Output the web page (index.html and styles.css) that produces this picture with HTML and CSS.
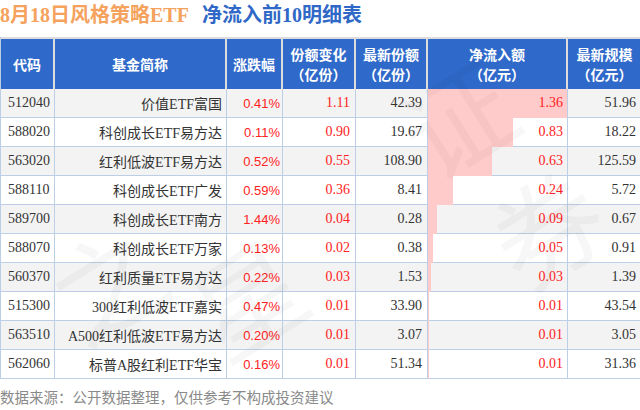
FILE: index.html
```html
<!DOCTYPE html>
<html lang="zh-CN">
<head>
<meta charset="utf-8">
<title>8月18日风格策略ETF 净流入前10明细表</title>
<link rel="stylesheet" href="styles.css">
</head>
<body>
<div class="page">
  <h1 class="title"><span class="t-orange">8月18日风格策略ETF</span><span class="t-blue">净流入前10明细表</span></h1>
  <div class="grid">
    <div class="hd">代码</div>
    <div class="hd">基金简称</div>
    <div class="hd">涨跌幅</div>
    <div class="hd">份额变化<br>（亿份）</div>
    <div class="hd">最新份额<br>（亿份）</div>
    <div class="hd">净流入额<br>（亿元）</div>
    <div class="hd last">最新规模<br>（亿元）</div>

    <div class="c code odd">512040</div><div class="c name odd">价值ETF富国</div><div class="c pct odd">0.41%</div><div class="c num red odd">1.11</div><div class="c num odd">42.39</div><div class="c flow odd"><div class="bar" style="width:139px"></div><span>1.36</span></div><div class="c num odd last">51.96</div>

    <div class="c code">588020</div><div class="c name">科创成长ETF易方达</div><div class="c pct">0.11%</div><div class="c num red">0.90</div><div class="c num">19.67</div><div class="c flow"><div class="bar" style="width:85px"></div><span>0.83</span></div><div class="c num last">18.22</div>

    <div class="c code odd">563020</div><div class="c name odd">红利低波ETF易方达</div><div class="c pct odd">0.52%</div><div class="c num red odd">0.55</div><div class="c num odd">108.90</div><div class="c flow odd"><div class="bar" style="width:64px"></div><span>0.63</span></div><div class="c num odd last">125.59</div>

    <div class="c code">588110</div><div class="c name">科创成长ETF广发</div><div class="c pct">0.59%</div><div class="c num red">0.36</div><div class="c num">8.41</div><div class="c flow"><div class="bar" style="width:25px"></div><span>0.24</span></div><div class="c num last">5.72</div>

    <div class="c code odd">589700</div><div class="c name odd">科创成长ETF南方</div><div class="c pct odd">1.44%</div><div class="c num red odd">0.04</div><div class="c num odd">0.28</div><div class="c flow odd"><div class="bar" style="width:9px"></div><span>0.09</span></div><div class="c num odd last">0.67</div>

    <div class="c code">588070</div><div class="c name">科创成长ETF万家</div><div class="c pct">0.13%</div><div class="c num red">0.02</div><div class="c num">0.38</div><div class="c flow"><div class="bar" style="width:5px"></div><span>0.05</span></div><div class="c num last">0.91</div>

    <div class="c code odd">560370</div><div class="c name odd">红利质量ETF易方达</div><div class="c pct odd">0.22%</div><div class="c num red odd">0.03</div><div class="c num odd">1.53</div><div class="c flow odd"><div class="bar" style="width:3px"></div><span>0.03</span></div><div class="c num odd last">1.39</div>

    <div class="c code">515300</div><div class="c name">300红利低波ETF嘉实</div><div class="c pct">0.47%</div><div class="c num red">0.01</div><div class="c num">33.90</div><div class="c flow"><div class="bar" style="width:1px"></div><span>0.01</span></div><div class="c num last">43.54</div>

    <div class="c code odd">563510</div><div class="c name odd">A500红利低波ETF易方达</div><div class="c pct odd">0.20%</div><div class="c num red odd">0.01</div><div class="c num odd">3.07</div><div class="c flow odd"><div class="bar" style="width:1px"></div><span>0.01</span></div><div class="c num odd last">3.05</div>

    <div class="c code">562060</div><div class="c name">标普A股红利ETF华宝</div><div class="c pct">0.16%</div><div class="c num red">0.01</div><div class="c num">51.34</div><div class="c flow"><div class="bar" style="width:1px"></div><span>0.01</span></div><div class="c num last">31.36</div>
  </div>
  <p class="source">数据来源：公开数据整理，仅供参考不构成投资建议</p>
  <div class="wm" aria-hidden="true">
    <span class="w w1">证</span>
    <span class="w w2">券</span>
    <span class="w w3">之</span>
    <span class="w w4">星</span>
  </div>
</div>
</body>
</html>
```

FILE: styles.css
```css
html, body {
  margin: 0;
  padding: 0;
  background: #ffffff;
}
body {
  width: 640px;
  height: 410px;
  overflow: hidden;
  font-family: "Liberation Serif", "Noto Sans CJK SC", serif;
}
.page {
  position: relative;
  width: 640px;
  height: 410px;
  overflow: hidden;
}
.title {
  margin: 0;
  height: 37px;
  display: flex;
  align-items: center;
  gap: 13px;
  padding: 0 0 8px 0;
  box-sizing: border-box;
  font-size: 20px;
  font-weight: bold;
  line-height: 24px;
  font-family: "Liberation Serif", "Noto Sans CJK SC", serif;
}
.t-orange { color: #f5a25d; }
.t-blue { color: #2f68c6; }

.grid {
  display: grid;
  grid-template-columns: 54px 172px 56px 73px 72px 140px 73px;
  grid-template-rows: 52px repeat(10, 29px);
  border-left: 1px solid #bccfe6;
}
.hd {
  background: #2f69ca;
  color: #ffffff;
  font-family: "Noto Sans CJK SC", sans-serif;
  font-weight: bold;
  font-size: 14px;
  line-height: 20px;
  display: flex;
  align-items: center;
  justify-content: center;
  text-align: center;
  border-top: 2px solid #dcdcdc;
  border-right: 2px solid #dcdcdc;
  box-sizing: border-box;
}
.hd.last { border-right: 0; }
.c {
  box-sizing: border-box;
  border-right: 1px solid #bccfe6;
  border-bottom: 1px solid #bccfe6;
  display: flex;
  align-items: center;
  font-size: 14px;
  color: #333333;
  background: #ffffff;
  white-space: nowrap;
}
.c.odd { background: #f3f3f3; }
.c.last { border-right: 0; }
.code {
  padding-left: 7px;
  font-family: "Liberation Serif", "Noto Sans CJK SC", serif;
}
.name {
  justify-content: flex-end;
  padding-right: 4px;
  font-family: "Liberation Serif", "Noto Sans CJK SC", serif;
}
.pct {
  justify-content: flex-end;
  padding-right: 2px;
  color: #ff2222;
  font-family: "Liberation Sans", "Noto Sans CJK SC", sans-serif;
  font-size: 13px;
}
.num {
  justify-content: flex-end;
  padding-right: 5px;
  font-family: "Liberation Serif", serif;
}
.red { color: #ff2222; }
.flow {
  position: relative;
  justify-content: flex-end;
  padding-right: 4px;
  color: #ff2222;
  font-family: "Liberation Serif", serif;
}
.flow .bar {
  position: absolute;
  left: 0;
  top: 0;
  bottom: -1px;
  background: #ffcaca;
}
.flow span {
  position: relative;
}
.source {
  margin: 9px 0 0 0;
  font-family: "Noto Sans CJK SC", sans-serif;
  font-size: 14.5px;
  line-height: 18px;
  color: #8a8a8a;
}
.wm {
  position: absolute;
  inset: 0;
  pointer-events: none;
}
.w {
  position: absolute;
  font-family: "Noto Sans CJK SC", sans-serif;
  font-size: 110px;
  line-height: 110px;
  font-weight: normal;
  color: rgba(0, 0, 0, 0.03);
  transform: rotate(-32deg);
}
.w1 { left: 400px; top: 60px; }
.w2 { left: 490px; top: 170px; }
.w3 { left: 50px; top: 225px; }
.w4 { left: 190px; top: 240px; }
```
